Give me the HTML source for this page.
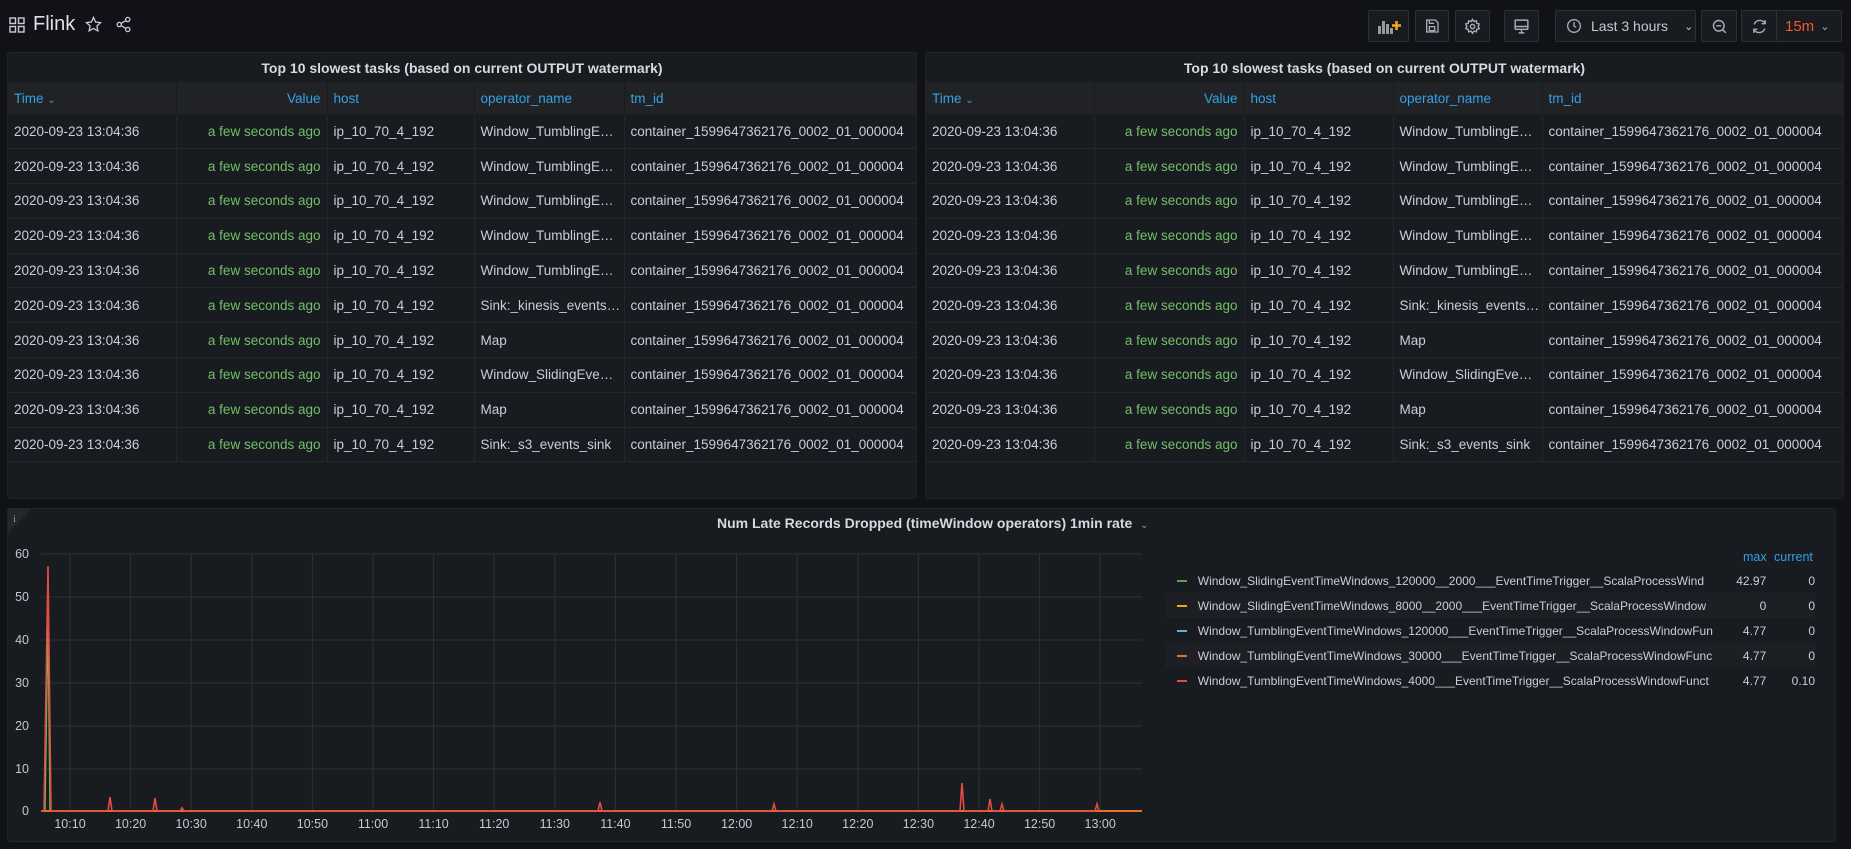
<!DOCTYPE html>
<html><head><meta charset="utf-8"><style>
*{box-sizing:border-box;margin:0;padding:0}
body{width:1851px;height:849px;background:#111217;font-family:"Liberation Sans",sans-serif;color:#ccccdc;position:relative;overflow:hidden;font-size:13.5px}
.abs{position:absolute}
.btn{position:absolute;top:10px;height:32px;border:1px solid #2c2f35;background:#181b1f;border-radius:2px;display:flex;align-items:center;justify-content:center;color:#aab;white-space:nowrap}
.panel{position:absolute;background:#181b1f;border:1px solid #222429;border-radius:3px;overflow:hidden}
.ptitle{position:absolute;left:0;right:0;top:7px;text-align:center;font-weight:bold;font-size:14px;color:#d8d9e0}
table{position:absolute;top:29px;left:0;border-collapse:collapse;table-layout:fixed}
th{background:#202226;color:#33a2e5;font-weight:normal;height:32px;text-align:left;padding:0 6px;border-right:1px solid #181b1f;white-space:nowrap}
td{height:34.8px;padding:0 6px;border-bottom:1px solid #23262a;border-right:1px solid #23262a;white-space:nowrap;overflow:hidden}
.r{text-align:right}
.g{color:#73bf69}
.leg{position:absolute;left:1165px;width:650px;height:25px;display:flex;align-items:center;font-size:12px}
.leg .dash{width:10px;height:2px;margin:0 11px 0 12px}
.leg .n{width:540px;white-space:nowrap}
.leg .mx{width:43px;text-align:right}
.leg .cu{width:50px;text-align:right}
</style></head><body>
<svg class="abs" style="left:9px;top:17px" width="16" height="16" viewBox="0 0 16 16" fill="none" stroke="#ccccdc" stroke-width="1.4"><rect x="1" y="1" width="5.5" height="5.5"/><rect x="9.5" y="1" width="5.5" height="5.5"/><rect x="1" y="9.5" width="5.5" height="5.5"/><rect x="9.5" y="9.5" width="5.5" height="5.5"/></svg>
<div class="abs" style="left:33px;top:13px;font-size:20px;color:#e0e0e8">Flink</div>
<svg class="abs" style="left:85px;top:16px" width="17" height="17" viewBox="0 0 24 24" fill="none" stroke="#ccccdc" stroke-width="1.8"><path d="M12 2l3 6.5 7 .8-5.2 4.8 1.4 7L12 17.6 5.8 21.1l1.4-7L2 9.3l7-.8z"/></svg>
<svg class="abs" style="left:115px;top:16px" width="17" height="17" viewBox="0 0 24 24" fill="none" stroke="#ccccdc" stroke-width="1.8"><circle cx="18" cy="5" r="3"/><circle cx="6" cy="12" r="3"/><circle cx="18" cy="19" r="3"/><path d="M8.6 13.5l6.8 4M15.4 6.5l-6.8 4"/></svg>

<div class="btn" style="left:1368px;width:41px"><svg width="24" height="16" viewBox="0 0 24 16"><rect x="1" y="8" width="3" height="8" fill="#999"/><rect x="5" y="3" width="3" height="13" fill="#999"/><rect x="9" y="6" width="3" height="10" fill="#999"/><rect x="13" y="10" width="3" height="6" fill="#999"/><path d="M19.5 3v9M15 7.5h9" stroke="#f5a623" stroke-width="2.6"/></svg></div>
<div class="btn" style="left:1415px;width:34px"><svg width="16" height="16" viewBox="0 0 24 24" fill="none" stroke="#aab" stroke-width="2"><path d="M4 3h13l4 4v14H4z"/><rect x="8" y="13" width="8" height="6"/><path d="M8 3v5h7"/></svg></div>
<div class="btn" style="left:1455px;width:35px"><svg width="17" height="17" viewBox="0 0 24 24" fill="none" stroke="#aab" stroke-width="2"><circle cx="12" cy="12" r="3"/><path d="M12 2l2 3 3.5-1 .5 3.5 3.5 1-1.5 3.5 1.5 3-3.5 1-.5 3.5-3.5-1-2 3-2-3-3.5 1-.5-3.5-3.5-1 1.5-3-1.5-3.5 3.5-1 .5-3.5 3.5 1z"/></svg></div>
<div class="btn" style="left:1504px;width:35px"><svg width="17" height="17" viewBox="0 0 24 24" fill="none" stroke="#aab" stroke-width="2"><rect x="3" y="3" width="18" height="13" rx="1"/><path d="M3 12h18M8 21h8M12 16v5"/></svg></div>
<div class="btn" style="left:1555px;width:141px;justify-content:flex-start;padding-left:10px;font-size:14px;color:#c7c7d0"><svg width="16" height="16" viewBox="0 0 24 24" fill="none" stroke="#aab" stroke-width="2"><circle cx="12" cy="12" r="9.5"/><path d="M12 6v6l3 2"/></svg><span style="margin-left:9px">Last 3 hours</span><span style="margin-left:16px;font-size:11px">&#8964;</span></div>
<div class="btn" style="left:1701px;width:36px"><svg width="17" height="17" viewBox="0 0 24 24" fill="none" stroke="#aab" stroke-width="2"><circle cx="11" cy="11" r="7.5"/><path d="M7.5 11h7M16.5 16.5L21 21"/></svg></div>
<div class="btn" style="left:1741px;width:101px;justify-content:flex-start"><span style="width:34px;display:flex;justify-content:center"><svg width="17" height="17" viewBox="0 0 24 24" fill="none" stroke="#aab" stroke-width="2"><path d="M20 8A8.5 8.5 0 0 0 4.5 9M4 16a8.5 8.5 0 0 0 15.5-1"/><path d="M20 3v5h-5M4 21v-5h5"/></svg></span><span style="border-left:1px solid #2c2f35;height:30px;display:flex;align-items:center;padding-left:8px;color:#f05a28;font-size:15px">15m <span style="color:#aab;font-size:11px;margin-left:6px">&#8964;</span></span></div>

<!-- left table -->
<div class="panel" style="left:7px;top:52px;width:910px;height:447px">
<div class="ptitle">Top 10 slowest tasks (based on current OUTPUT watermark)</div>
<table style="width:910px">
<colgroup><col style="width:168px"><col style="width:151px"><col style="width:147px"><col style="width:150px"><col style="width:294px"></colgroup>
<tr><th>Time <span style="font-size:10px">&#8964;</span></th><th class="r">Value</th><th>host</th><th>operator_name</th><th>tm_id</th></tr>
<tr><td>2020-09-23 13:04:36</td><td class="r g">a few seconds ago</td><td>ip_10_70_4_192</td><td>Window_TumblingE…</td><td>container_1599647362176_0002_01_000004</td></tr>
<tr><td>2020-09-23 13:04:36</td><td class="r g">a few seconds ago</td><td>ip_10_70_4_192</td><td>Window_TumblingE…</td><td>container_1599647362176_0002_01_000004</td></tr>
<tr><td>2020-09-23 13:04:36</td><td class="r g">a few seconds ago</td><td>ip_10_70_4_192</td><td>Window_TumblingE…</td><td>container_1599647362176_0002_01_000004</td></tr>
<tr><td>2020-09-23 13:04:36</td><td class="r g">a few seconds ago</td><td>ip_10_70_4_192</td><td>Window_TumblingE…</td><td>container_1599647362176_0002_01_000004</td></tr>
<tr><td>2020-09-23 13:04:36</td><td class="r g">a few seconds ago</td><td>ip_10_70_4_192</td><td>Window_TumblingE…</td><td>container_1599647362176_0002_01_000004</td></tr>
<tr><td>2020-09-23 13:04:36</td><td class="r g">a few seconds ago</td><td>ip_10_70_4_192</td><td>Sink:_kinesis_events…</td><td>container_1599647362176_0002_01_000004</td></tr>
<tr><td>2020-09-23 13:04:36</td><td class="r g">a few seconds ago</td><td>ip_10_70_4_192</td><td>Map</td><td>container_1599647362176_0002_01_000004</td></tr>
<tr><td>2020-09-23 13:04:36</td><td class="r g">a few seconds ago</td><td>ip_10_70_4_192</td><td>Window_SlidingEve…</td><td>container_1599647362176_0002_01_000004</td></tr>
<tr><td>2020-09-23 13:04:36</td><td class="r g">a few seconds ago</td><td>ip_10_70_4_192</td><td>Map</td><td>container_1599647362176_0002_01_000004</td></tr>
<tr><td>2020-09-23 13:04:36</td><td class="r g">a few seconds ago</td><td>ip_10_70_4_192</td><td>Sink:_s3_events_sink</td><td>container_1599647362176_0002_01_000004</td></tr>
</table></div>

<!-- right table -->
<div class="panel" style="left:925px;top:52px;width:919px;height:447px">
<div class="ptitle">Top 10 slowest tasks (based on current OUTPUT watermark)</div>
<table style="width:919px">
<colgroup><col style="width:168px"><col style="width:150px"><col style="width:149px"><col style="width:149px"><col style="width:303px"></colgroup>
<tr><th>Time <span style="font-size:10px">&#8964;</span></th><th class="r">Value</th><th>host</th><th>operator_name</th><th>tm_id</th></tr>
<tr><td>2020-09-23 13:04:36</td><td class="r g">a few seconds ago</td><td>ip_10_70_4_192</td><td>Window_TumblingE…</td><td>container_1599647362176_0002_01_000004</td></tr>
<tr><td>2020-09-23 13:04:36</td><td class="r g">a few seconds ago</td><td>ip_10_70_4_192</td><td>Window_TumblingE…</td><td>container_1599647362176_0002_01_000004</td></tr>
<tr><td>2020-09-23 13:04:36</td><td class="r g">a few seconds ago</td><td>ip_10_70_4_192</td><td>Window_TumblingE…</td><td>container_1599647362176_0002_01_000004</td></tr>
<tr><td>2020-09-23 13:04:36</td><td class="r g">a few seconds ago</td><td>ip_10_70_4_192</td><td>Window_TumblingE…</td><td>container_1599647362176_0002_01_000004</td></tr>
<tr><td>2020-09-23 13:04:36</td><td class="r g">a few seconds ago</td><td>ip_10_70_4_192</td><td>Window_TumblingE…</td><td>container_1599647362176_0002_01_000004</td></tr>
<tr><td>2020-09-23 13:04:36</td><td class="r g">a few seconds ago</td><td>ip_10_70_4_192</td><td>Sink:_kinesis_events…</td><td>container_1599647362176_0002_01_000004</td></tr>
<tr><td>2020-09-23 13:04:36</td><td class="r g">a few seconds ago</td><td>ip_10_70_4_192</td><td>Map</td><td>container_1599647362176_0002_01_000004</td></tr>
<tr><td>2020-09-23 13:04:36</td><td class="r g">a few seconds ago</td><td>ip_10_70_4_192</td><td>Window_SlidingEve…</td><td>container_1599647362176_0002_01_000004</td></tr>
<tr><td>2020-09-23 13:04:36</td><td class="r g">a few seconds ago</td><td>ip_10_70_4_192</td><td>Map</td><td>container_1599647362176_0002_01_000004</td></tr>
<tr><td>2020-09-23 13:04:36</td><td class="r g">a few seconds ago</td><td>ip_10_70_4_192</td><td>Sink:_s3_events_sink</td><td>container_1599647362176_0002_01_000004</td></tr>
</table></div>

<!-- graph panel -->
<div class="panel" style="left:7px;top:508px;width:1829px;height:334px"></div>
<svg class="abs" style="left:8px;top:509px" width="24" height="24"><path d="M0 0H24L0 24Z" fill="#23262b"/><text x="5" y="13" font-size="10" fill="#999" font-family="Liberation Serif">i</text></svg>
<div class="abs" style="left:717px;top:515px;font-weight:bold;font-size:14px;color:#d8d9e0">Num Late Records Dropped (timeWindow operators) 1min rate <span style="font-weight:normal;font-size:10px;color:#999;margin-left:4px">&#8964;</span></div>
<svg class="abs" style="left:0;top:0" width="1851" height="849" font-family="Liberation Sans" font-size="12.5" fill="#c7c7d0">
<g stroke="#2f3136" stroke-width="1">
<path d="M41 554H1142M41 597H1142M41 640H1142M41 683H1142M41 726H1142M41 769H1142"/>
<path d="M70 554V811M130.6 554V811M191.2 554V811M251.8 554V811M312.4 554V811M373 554V811M433.6 554V811M494.2 554V811M554.8 554V811M615.4 554V811M676 554V811M736.6 554V811M797.2 554V811M857.8 554V811M918.4 554V811M979 554V811M1039.6 554V811M1100.2 554V811"/>
</g>
<g text-anchor="end"><text x="29" y="558">60</text><text x="29" y="601">50</text><text x="29" y="644">40</text><text x="29" y="687">30</text><text x="29" y="730">20</text><text x="29" y="773">10</text><text x="29" y="815">0</text></g>
<g text-anchor="middle"><text x="70" y="828">10:10</text><text x="130.6" y="828">10:20</text><text x="191.2" y="828">10:30</text><text x="251.8" y="828">10:40</text><text x="312.4" y="828">10:50</text><text x="373" y="828">11:00</text><text x="433.6" y="828">11:10</text><text x="494.2" y="828">11:20</text><text x="554.8" y="828">11:30</text><text x="615.4" y="828">11:40</text><text x="676" y="828">11:50</text><text x="736.6" y="828">12:00</text><text x="797.2" y="828">12:10</text><text x="857.8" y="828">12:20</text><text x="918.4" y="828">12:30</text><text x="979" y="828">12:40</text><text x="1039.6" y="828">12:50</text><text x="1100.2" y="828">13:00</text></g>
<path d="M41 811H1142" stroke="#e0752d" stroke-width="2"/>
<path d="M41 811L45 810L48 620L50 811" stroke="#73bf69" stroke-width="1.3" fill="none"/>
<path d="M41 811H44L48 566L51 811H108L110 797L112 811H153L155 798L157 811H180L182 808L184 811H598L600 802L602 811H772L774 804L776 811H960L962 783L964 811H988L990 799L992 811H1000L1002 804L1004 811H1095L1097 804L1099 811" stroke="#e24d42" stroke-width="1.6" fill="none"/>
</svg>
<div class="abs" style="left:1743px;top:550px;color:#33a2e5;font-size:12.5px">max</div>
<div class="abs" style="left:1774px;top:550px;color:#33a2e5;font-size:12.5px">current</div>
<div class="leg" style="top:568px"><span class="dash" style="background:#629e51"></span><span class="n">Window_SlidingEventTimeWindows_120000__2000___EventTimeTrigger__ScalaProcessWind</span><span class="mx">42.97</span><span class="cu">0</span></div>
<div class="leg" style="top:593px;background:#1d1f24"><span class="dash" style="background:#e5ac0e"></span><span class="n">Window_SlidingEventTimeWindows_8000__2000___EventTimeTrigger__ScalaProcessWindow</span><span class="mx">0</span><span class="cu">0</span></div>
<div class="leg" style="top:618px"><span class="dash" style="background:#64b0c8"></span><span class="n">Window_TumblingEventTimeWindows_120000___EventTimeTrigger__ScalaProcessWindowFun</span><span class="mx">4.77</span><span class="cu">0</span></div>
<div class="leg" style="top:643px;background:#1d1f24"><span class="dash" style="background:#e0752d"></span><span class="n">Window_TumblingEventTimeWindows_30000___EventTimeTrigger__ScalaProcessWindowFunc</span><span class="mx">4.77</span><span class="cu">0</span></div>
<div class="leg" style="top:668px"><span class="dash" style="background:#e24d42"></span><span class="n">Window_TumblingEventTimeWindows_4000___EventTimeTrigger__ScalaProcessWindowFunct</span><span class="mx">4.77</span><span class="cu">0.10</span></div>
</body></html>
